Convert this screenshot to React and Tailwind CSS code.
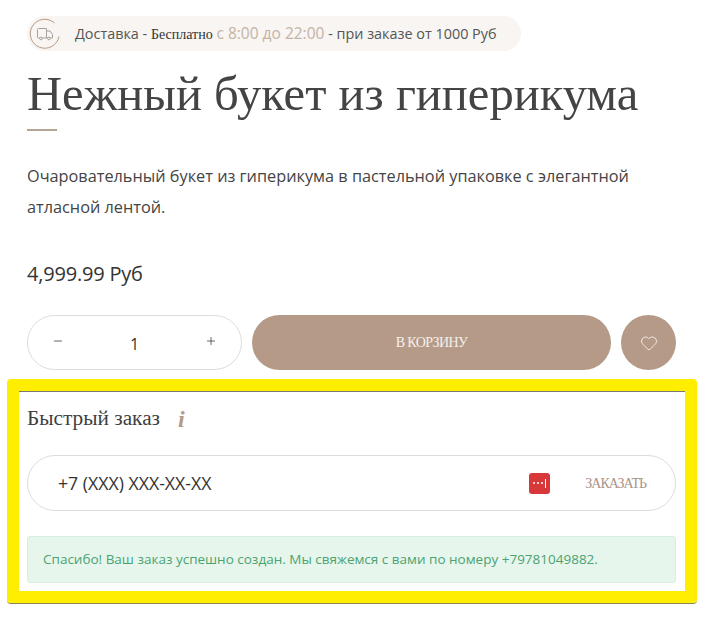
import { Heart, Minus, Plus } from "lucide-react"

const sans = "font-['Open_Sans',sans-serif]"
const serif = "font-['Liberation_Serif',serif]"

function TruckIcon() {
    return (
        <svg width="32" height="32" viewBox="0 0 32 32" fill="none" stroke="#b59a87" className="shrink-0">
            <path d="M30 18.500A14.500 14.500 0 1 1 25.500 5" strokeWidth="1" />
            <path d="M9.500 10.500h8v9.500h-8a1 1 0 0 1-1-1v-7.500a1 1 0 0 1 1-1z" strokeWidth="1" stroke="#a8a09a" />
            <path d="M17.500 13h3.500l2.500 3.500v3.500h-6" strokeWidth="1" stroke="#a8a09a" />
            <circle cx="12" cy="20.500" r="1.300" fill="#fff" stroke="#a8a09a" />
            <circle cx="20" cy="20.500" r="1.300" fill="#fff" stroke="#a8a09a" />
        </svg>
    )
}

export default function App() {
    return (
        <div className={`w-[704px] h-[619px] bg-white overflow-hidden pt-4 ${sans}`}>
            <div className="pl-[27px] pr-7">
                <div className="flex items-center w-[494px] h-[35px] rounded-full bg-[#f8f5f2] pl-0.5">
                    <TruckIcon />
                    <p className="ml-[14px] text-[14.400px] leading-5 text-[#555] whitespace-nowrap">
                        Доставка - <span className={`text-[#333] text-[14px] ${serif}`}>Бесплатно</span>{" "}
                        <span className="text-[#c4b3a6] text-[15.500px]">с 8:00 до 22:00</span> - при заказе от 1000 Руб
                    </p>
                </div>
                <h1 className={`mt-[11px] text-[48.600px] leading-[64px] font-normal text-[#444] whitespace-nowrap ${serif}`}>
                    Нежный букет из гиперикума
                </h1>
                <div className="mt-[3px] w-[30px] h-[2px] bg-[#b5a595]"></div>
                <p className="mt-[30px] w-[640px] text-[16.300px] leading-[31px] text-[#444]">
                    Очаровательный букет из гиперикума в пастельной упаковке с элегантной атласной лентой.
                </p>
                <p className="mt-[37px] text-[20px] leading-7 tracking-[-0.2px] text-[#333]">4,999.99 Руб</p>
                <div className="mt-[27px] flex gap-[10px] h-[55px]">
                    <div className="w-[215px] rounded-full border border-[#dcdcdc] flex items-center justify-between px-[24px] text-[#333]">
                        <Minus size={12} strokeWidth={1.500} className="-mt-1" />
                        <span className="text-[16px] mt-0.5">1</span>
                        <Plus size={12} strokeWidth={1.500} className="-mt-1" />
                    </div>
                    <button className={`w-[359px] rounded-full bg-[#b59a87] text-white/85 text-[14px] tracking-[-0.6px] ${serif}`}>
                        В КОРЗИНУ
                    </button>
                    <button className="w-[55px] rounded-full bg-[#b59a87] flex items-center justify-center text-white">
                        <Heart size={18} strokeWidth={1} />
                    </button>
                </div>
            </div>

            <div className="mt-[9px] ml-[7px] w-[690px] h-[224px] rounded-[4px] border-[12px] border-[#ffee00] shadow-[0_1px_0_#8a8450]">
                <div className="h-full border-t border-t-[#777] pl-2 pr-[9px]">
                    <div className="mt-[14px] flex items-center h-[26px]">
                        <h3 className={`text-[21.300px] text-[#3f3f3f] font-normal ${serif}`}>Быстрый заказ</h3>
                        <span className={`ml-[18px] text-[24px] font-bold italic text-[#b59a87] ${serif}`}>i</span>
                    </div>
                    <div className="mt-[23px] h-[56px] rounded-full border border-[#dcdcdc] flex items-center pl-[30px] pr-[29px]">
                        <span className="text-[17.700px] text-[#333]">+7 (XXX) XXX-XX-XX</span>
                        <span className="ml-auto w-[21px] h-[21px] rounded-[3px] bg-[#d8383a] flex items-center justify-center gap-[2px]">
                            <i className="w-[2px] h-[2px] rounded-full bg-white"></i>
                            <i className="w-[2px] h-[2px] rounded-full bg-white"></i>
                            <i className="w-[2px] h-[2px] rounded-full bg-white"></i>
                            <i className="w-px h-[9px] bg-white"></i>
                        </span>
                        <span className={`ml-[35px] text-[14px] tracking-[-1px] text-[#a8948a] ${serif}`}>ЗАКАЗАТЬ</span>
                    </div>
                    <div className="mt-[25px] h-[47px] rounded-[3px] border border-[#d6efe0] bg-[#e7f6ec] flex items-center pl-[15px] text-[13.500px] text-[#4aa371] whitespace-nowrap">
                        Спасибо! Ваш заказ успешно создан. Мы свяжемся с вами по номеру +79781049882.
                    </div>
                </div>
            </div>
        </div>
    )
}
